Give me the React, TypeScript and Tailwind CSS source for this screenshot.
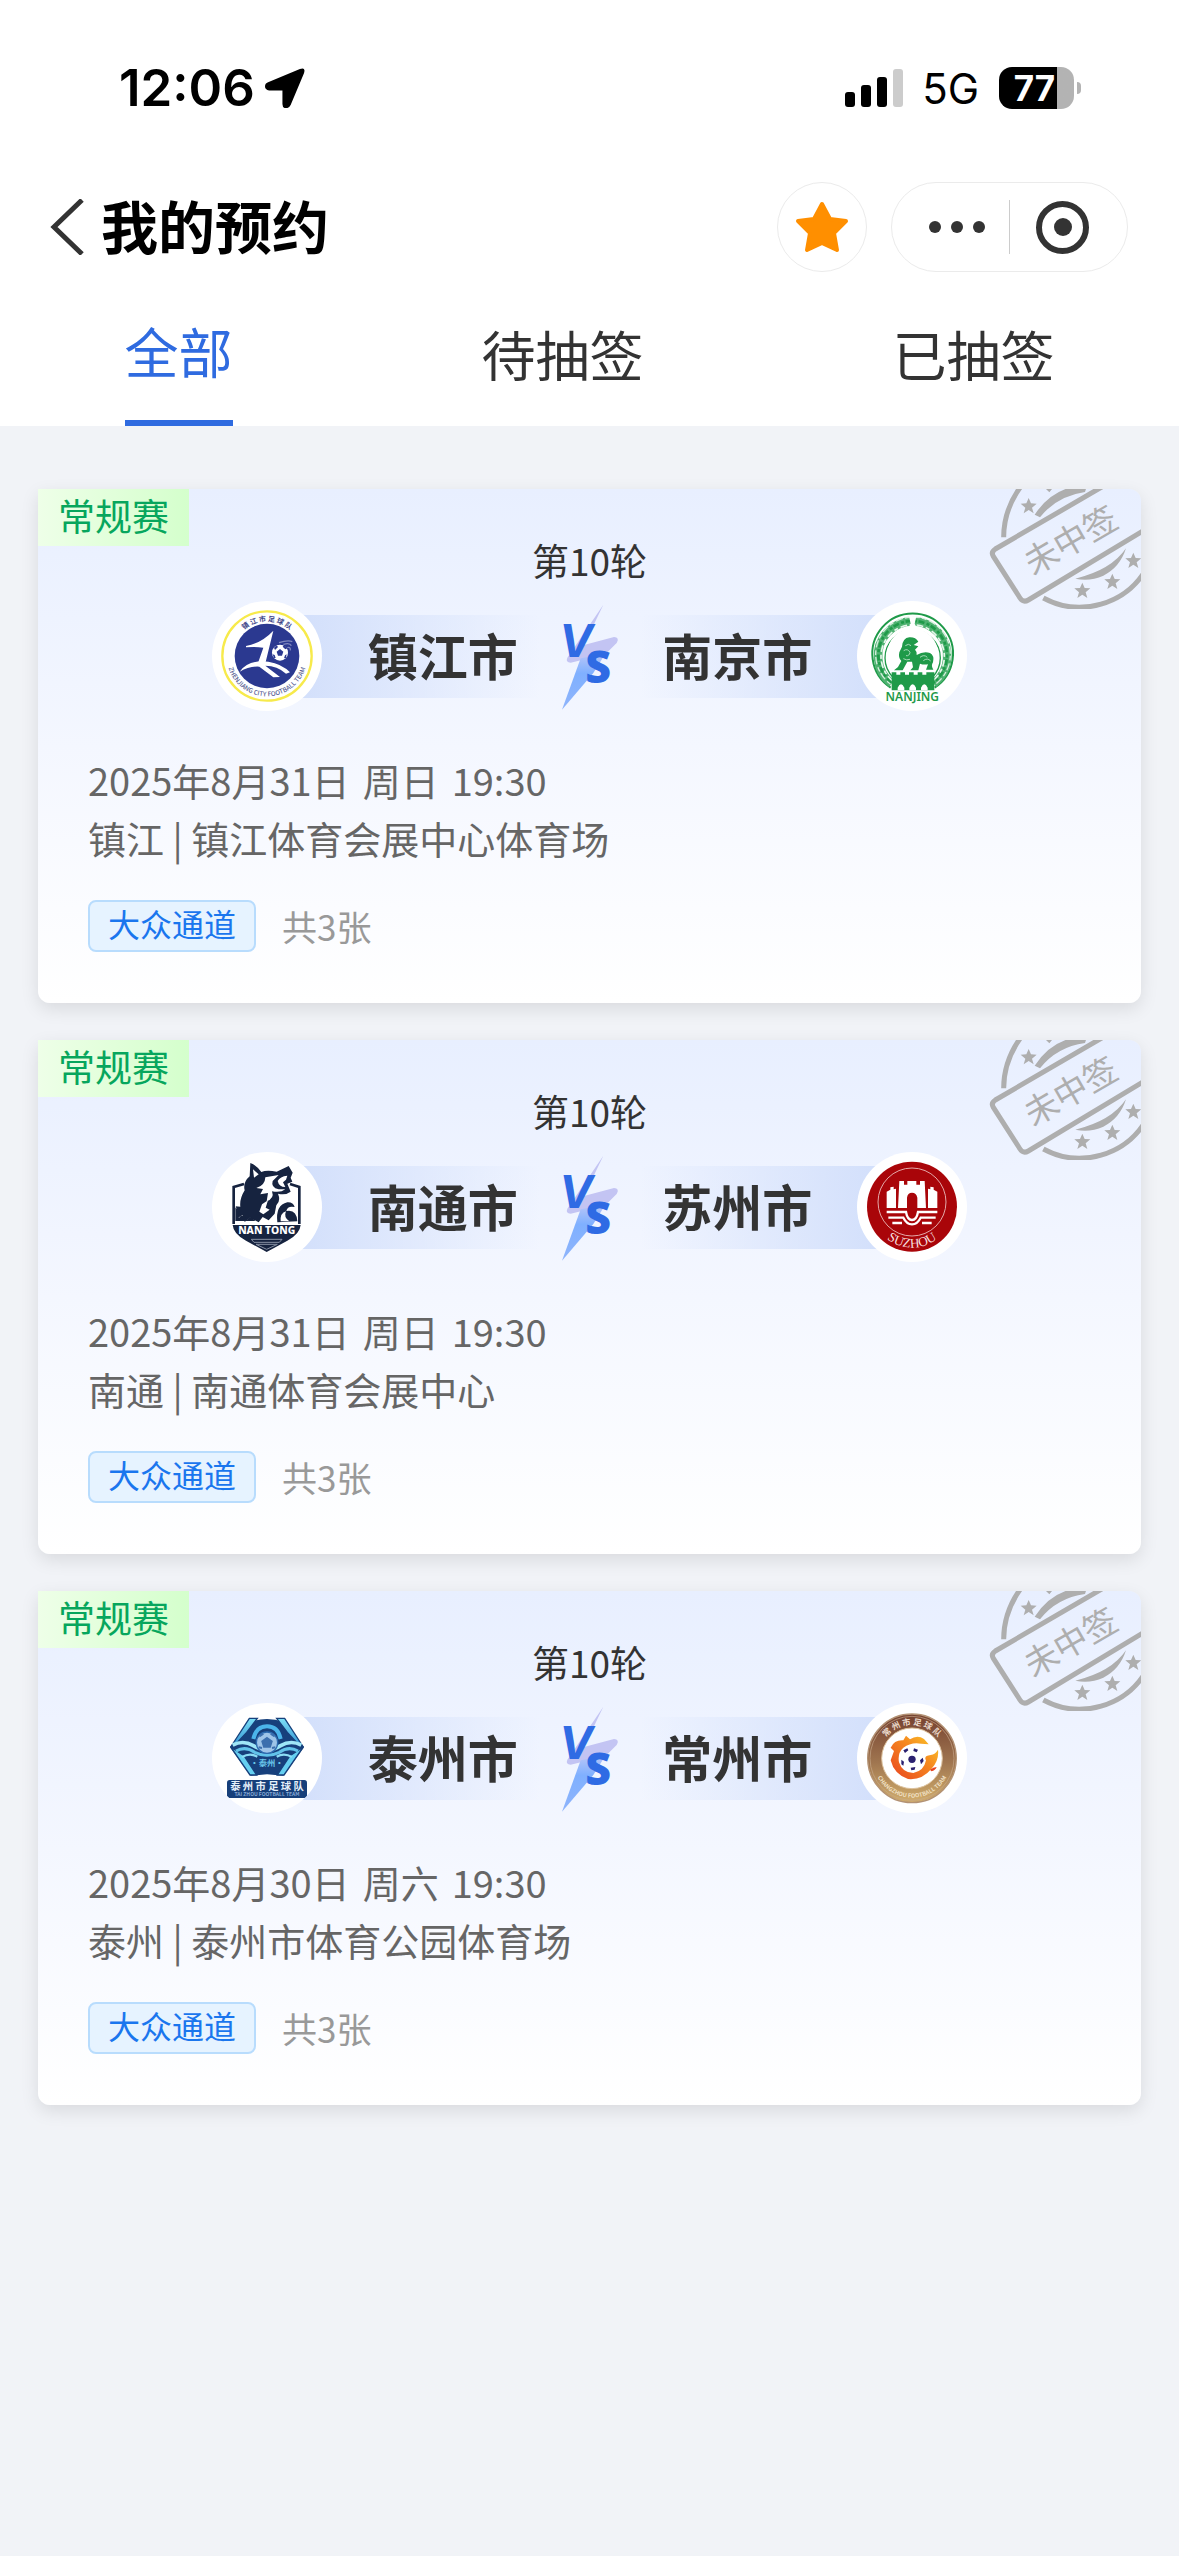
import { useState } from 'react';
import type { ReactNode } from 'react';

type Match = {
  id: number;
  round: string;
  home: string;
  away: string;
  homeLogo: ReactNode;
  awayLogo: ReactNode;
  day: string;
  weekday: string;
  time: string;
  venue: string;
};

const STAR = '0,-25 7,-9 24,-8 10,4 15,21 0,11 -15,21 -10,4 -24,-8 -7,-9';

/* ---------- team logos ---------- */

function ZhenjiangLogo() {
  return (
    <svg viewBox="36 32 330 330" className="size-full" aria-hidden="true">
      <defs>
        <path id="zj-top" d="M97 197 A104 104 0 0 1 305 197" />
        <path id="zj-bottom" d="M80 197 A121 121 0 0 0 322 197" />
      </defs>
      <circle cx="201" cy="197" r="134" fill="#fff" stroke="#f7ea4b" strokeWidth="7" />
      <circle cx="201" cy="197" r="97" fill="#2b3990" />
      <text fill="#3d4588" fontSize="21" fontWeight="700">
        <textPath href="#zj-top" startOffset="50%" textAnchor="middle">镇 江 市 足 球 队</textPath>
      </text>
      <text fill="#555c92" fontSize="19" fontWeight="500">
        <textPath href="#zj-bottom" startOffset="50%" textAnchor="middle">ZHENJIANG CITY FOOTBALL TEAM</textPath>
      </text>
      <path d="M138 167 Q185 158 220 121 L197 215 L175 215 L190 172 Q165 168 138 171 Z" fill="#fff" />
      <path d="M119 244 Q145 207 205 214 Q245 220 270 246 L258 250 Q232 226 196 226 L240 260 L220 261 L178 229 Q148 227 119 244 Z" fill="#fff" />
      <circle cx="240" cy="187" r="24" fill="#fff" />
      <path d="M240 176 l10 8 -4 12 h-12 l-4 -12 z M222 172 l8 -7 4 5 -9 9 z M252 165 l9 9 -5 3 -8 -8 z M218 192 l6 2 3 9 -5 1 z M260 192 l-5 3 -3 9 6 -1 z" fill="#2b3990" />
      <path d="M237 157 Q264 148 277 154 M250 162 Q270 156 274 166 M262 172 Q272 168 271 180" stroke="#8089bd" strokeWidth="4" fill="none" />
    </svg>
  );
}

function NanjingLogo() {
  return (
    <svg viewBox="51 32 330 330" className="size-full" aria-hidden="true">
      <path d="M152 292 A121 121 0 1 1 284 292" fill="none" stroke="#1f9a49" strokeWidth="6" />
      <path d="M155 280 A104 104 0 1 1 281 280" fill="none" stroke="#4fb271" strokeWidth="26" />
      <path d="M152 282 A112 112 0 1 1 286 282" fill="none" stroke="#d5eedd" strokeWidth="4" strokeDasharray="14 9 22 6" />
      <path d="M155 276 A103 103 0 1 1 281 276" fill="none" stroke="#1f9a49" strokeWidth="8" strokeDasharray="18 7 9 5" />
      <path d="M158 272 A95 95 0 1 1 278 272" fill="none" stroke="#e6f5eb" strokeWidth="5" strokeDasharray="20 8 12 9" />
      <path d="M160 262 A83 83 0 1 1 276 262" fill="none" stroke="#1f9a49" strokeWidth="4" />
      <circle cx="218" cy="190" r="76" fill="#fff" />
      <path d="M207 78 h22 l-5 22 9 17 h-30 l9 -17 z" fill="#fff" />
      {/* stone lion */}
      <path
        d="M186 169 Q188 143 208 141 Q227 140 235 154 L221 164 L235 168 L225 178 Q232 184 230 194 Q250 182 270 188 Q284 196 279 216 Q272 226 280 238 L258 238 L264 222 Q250 224 240 220 L235 240 L211 240 L219 231 L216 214 L202 214 L188 240 L162 240 L174 230 L184 212 Q174 203 178 186 Z"
        fill="#1f9a49"
      />
      <path d="M196 166 q10 -8 17 0 M191 181 q12 -8 19 5 q-2 12 -12 10 M240 201 q12 -10 22 0 M250 211 q12 -10 22 1 M190 205 q10 6 20 2" stroke="#a9d9b9" strokeWidth="3" fill="none" />
      {/* city wall */}
      <path d="M155 246 h14 v7 h12 v-7 h14 v7 h12 v-7 h14 v7 h12 v-7 h14 v7 h12 v-7 h24 V300 H155 Z" fill="#1f9a49" />
      <path d="M173 300 v-8 q10 -20 20 0 v8 z M208 300 v-8 q10 -20 20 0 v8 z M243 300 v-8 q10 -20 20 0 v8 z" fill="#fff" />
      <text x="217" y="333" textAnchor="middle" fill="#1f9a49" fontSize="36" fontWeight="600" className="font-['Noto_Sans']">
        NANJING
      </text>
    </svg>
  );
}

function NantongLogo() {
  return (
    <svg viewBox="36 39 330 330" className="size-full" aria-hidden="true">
      <path d="M132 135 L101 144 V255 M270 135 L298 144 V255" fill="none" stroke="#16233f" strokeWidth="8" />
      <path d="M98 258 H302 Q300 285 262 305 L200 339 L138 305 Q100 285 98 258 Z" fill="#16233f" />
      <path
        d="M151 72 Q168 78 184 99 Q200 92 230 98 L266 81 L278 101 L272 116 L277 128 L262 134 L272 158 Q256 170 234 164 Q243 186 229 199 L224 224 L206 244 L188 234 L176 250 L150 236 L134 249 L128 228 L112 238 Q114 214 107 202 L121 203 Q118 180 134 154 Q128 130 149 112 Z"
        fill="#16233f"
      />
      <path d="M159 91 L176 106 L162 116 Z" fill="#fff" />
      <path d="M196 115 L236 108 L218 126 Q212 146 236 151 L256 151 Q242 162 216 157 Q224 178 200 187 L204 162 L181 166 L189 150 L169 147 Q195 140 196 115 Z" fill="#fff" />
      <path d="M233 126 Q240 112 262 110 L258 122 L249 130 L256 144 Q237 144 233 126 Z" fill="#fff" />
      <path d="M186 196 L204 184 L197 206 L209 212 L190 226 L178 218 Z" fill="#fff" />
      <path d="M106 205 Q120 216 116 238 Q128 218 140 244 Q152 226 166 246 H106 Z" fill="#16233f" />
      <path d="M232 250 Q226 198 262 190 Q280 189 284 204 Q262 200 259 216 Q290 210 292 247 Z" fill="#16233f" />
      <path d="M242 247 Q240 222 258 217 Q250 235 268 247 Z" fill="#fff" />
      <text x="200" y="286" textAnchor="middle" fill="#fff" fontSize="31" fontWeight="800" className="font-['Noto_Sans']">
        NAN TONG
      </text>
      <path d="M154 301 H246 L238 310 H162 Z" fill="none" stroke="#8790a3" strokeWidth="3" />
      <path d="M168 316 H232 L200 331 Z" fill="none" stroke="#8790a3" strokeWidth="3" />
    </svg>
  );
}

function SuzhouLogo() {
  return (
    <svg viewBox="51 39 330 330" className="size-full" aria-hidden="true">
      <defs>
        <path id="sz-bottom" d="M94 204 A122 122 0 0 0 338 204" />
      </defs>
      <circle cx="216" cy="203" r="135" fill="#a90509" />
      <circle cx="216" cy="189" r="102" fill="none" stroke="#e3a9a9" strokeWidth="3" />
      <path d="M140 207 V158 L151 152 V145 L161 143 V151 L168 149 V207 Z M264 207 V149 L271 151 V143 L281 145 V152 L292 158 V207 Z" fill="#fff" />
      <path d="M174 207 L178 126 H192 V137 H202 V126 H229 V137 H240 V126 H254 L258 207 H232 V176 Q229 161 216 161 Q203 161 201 176 V207 Z" fill="#fff" />
      <path d="M140 219 H198 Q202 243 216 243 Q230 243 234 219 H292 M145 236 H190 Q200 256 216 256 Q232 256 242 236 H287 M157 252 H186 M246 252 H275" fill="none" stroke="#fff" strokeWidth="7" />
      <text fill="#f6dede" fontSize="40" className="font-['Liberation_Serif']">
        <textPath href="#sz-bottom" startOffset="50%" textAnchor="middle">SUZHOU</textPath>
      </text>
    </svg>
  );
}

function TaizhouLogo() {
  return (
    <svg viewBox="36 42 330 330" className="size-full" aria-hidden="true">
      <defs>
        <linearGradient id="tz-wing" x1="0" x2="0" y1="0" y2="1">
          <stop offset="0" stopColor="#7de0f8" />
          <stop offset="1" stopColor="#2f8fd0" />
        </linearGradient>
      </defs>
      <path d="M152 98 Q176 90 201 90 Q226 90 250 98 L312 174 L250 260 L201 256 L152 260 L90 174 Z" fill="#17407c" />
      <path d="M148 88 H172 L140 130 L112 160 L92 174 Z" fill="url(#tz-wing)" stroke="#17407c" strokeWidth="4" />
      <path d="M254 88 H230 L262 130 L290 160 L310 174 Z" fill="url(#tz-wing)" stroke="#17407c" strokeWidth="4" />
      <path d="M92 174 L150 258 H170 L132 200 Z" fill="#65cff0" stroke="#17407c" strokeWidth="4" />
      <path d="M310 174 L252 258 H232 L270 200 Z" fill="#65cff0" stroke="#17407c" strokeWidth="4" />
      <path d="M160 150 Q168 112 201 112 Q234 112 242 150" fill="none" stroke="#4bb4ea" strokeWidth="12" />
      <path d="M98 168 Q130 152 160 170 Q201 196 242 170 Q272 152 304 168" fill="none" stroke="#9fe6f7" strokeWidth="11" />
      <path d="M108 186 Q136 170 164 190 Q201 208 238 190 Q266 170 294 186" fill="none" stroke="#62c3ea" strokeWidth="9" />
      <path d="M126 204 Q150 190 172 203 M276 204 Q252 190 230 203" fill="none" stroke="#8bdcf5" strokeWidth="7" />
      <circle cx="201" cy="161" r="32" fill="#9ec4e8" stroke="#2c6bb0" strokeWidth="4" />
      <path d="M201 147 l14 10 -5 16 h-18 l-5 -16 z M178 142 l12 -8 M212 134 l12 8 M176 175 l10 2 M216 177 l10 -2" fill="#3c6fae" stroke="#3c6fae" strokeWidth="6" />
      <text x="201" y="232" textAnchor="middle" fill="#6bc8ec" fontSize="25" fontWeight="700">
        ·泰州·
      </text>
      <rect x="81" y="273" width="240" height="54" rx="8" fill="#173f7a" />
      <text x="201" y="304" textAnchor="middle" fill="#e6f1fb" fontSize="31" fontWeight="700">
        泰 州 市 足 球 队
      </text>
      <text x="201" y="322" textAnchor="middle" fill="#86a9d4" fontSize="15" fontWeight="700">
        TAI ZHOU FOOTBALL TEAM
      </text>
    </svg>
  );
}

function ChangzhouLogo() {
  return (
    <svg viewBox="51 42 330 330" className="size-full" aria-hidden="true">
      <defs>
        <linearGradient id="cz-ring" x1="0" x2="0" y1="0" y2="1">
          <stop offset="0" stopColor="#74402f" />
          <stop offset="0.55" stopColor="#a07650" />
          <stop offset="1" stopColor="#d1ad6c" />
        </linearGradient>
        <linearGradient id="cz-fire" x1="0" x2="1" y1="1" y2="0">
          <stop offset="0" stopColor="#e8431f" />
          <stop offset="0.6" stopColor="#f68b1f" />
          <stop offset="1" stopColor="#fbd12c" />
        </linearGradient>
        <path id="cz-top" d="M116 208 A100 100 0 0 1 316 208" />
        <path id="cz-bottom" d="M98 208 A118 118 0 0 0 334 208" />
      </defs>
      <circle cx="216" cy="208" r="133" fill="url(#cz-ring)" stroke="#b39274" strokeWidth="4" />
      <circle cx="216" cy="208" r="126" fill="none" stroke="#c7a98c" strokeWidth="2" />
      <circle cx="216" cy="208" r="91" fill="#fff" stroke="#dcc19c" strokeWidth="3" />
      <text fill="#ead9cb" fontSize="25" fontWeight="700">
        <textPath href="#cz-top" startOffset="50%" textAnchor="middle">常 州 市 足 球 队</textPath>
      </text>
      <text fill="#f0e0c4" fontSize="17" fontWeight="700">
        <textPath href="#cz-bottom" startOffset="50%" textAnchor="middle">CHANGZHOU FOOTBALL TEAM</textPath>
      </text>
      <circle cx="217" cy="211" r="38" fill="#fff" />
      <path
        d="M152 176 Q163 152 190 154 L198 140 L210 151 Q232 136 252 150 L266 166 L244 164 Q214 158 190 176 Q172 192 177 220 Q187 252 220 252 Q252 246 258 214 Q250 200 272 198 Q286 196 294 182 Q298 214 274 240 Q246 274 204 270 Q162 256 152 214 L162 186 Z"
        fill="url(#cz-fire)"
      />
      <path d="M270 242 Q280 234 290 234 Q286 244 274 247 Z" fill="#e8431f" />
      <circle cx="216" cy="211" r="11" fill="#2b2170" />
      <path d="M190 184 l12 -6 3 6 -10 8 z M222 178 l12 4 -4 8 -10 -4 z M184 212 l8 6 -2 12 -6 -4 z M212 236 l14 -2 -2 8 -10 2 z M240 214 l8 -8 3 10 -8 10 z" fill="#2b2170" />
    </svg>
  );
}

/* ---------- small drawings ---------- */

function VersusMark() {
  return (
    <svg viewBox="0 0 300 390" className="h-[130px] w-[100px] shrink-0" role="img" aria-label="VS">
      <defs>
        <linearGradient id="vs-bolt" x1="0" x2="0" y1="0" y2="1">
          <stop offset="0" stopColor="#b9c6f8" />
          <stop offset="0.35" stopColor="#7fb0ff" />
          <stop offset="1" stopColor="#8fb4fb" />
        </linearGradient>
      </defs>
      <path d="M190 41 L132 162 L222 138 Q240 140 230 156 L196 190 L92 215 Q76 214 82 200 Z" fill="#c3c4f3" />
      <path d="M122 202 L196 188 L160 246 L66 356 Z" fill="url(#vs-bolt)" />
      <g fill="#2f6be4">
        <text x="57" y="197" fontSize="137" fontWeight="700" fontStyle="italic" className="font-['Inter']">
          V
        </text>
        <text x="136" y="276" fontSize="134" fontWeight="800" className="font-['Open_Sans']">
          S
        </text>
      </g>
    </svg>
  );
}

function LostStamp() {
  return (
    <svg viewBox="57 27 456 360" className="absolute top-0 right-0 h-[120px] w-[152px]" role="img" aria-label="未中签">
      <g fill="none" stroke="#aeaeae" strokeWidth="15">
        <path d="M500 -40 L76 207 Q62 216 70 229 L150 354 Q160 369 175 360 L530 146" />
        <path d="M101 172 Q101 90 152 20" />
        <path d="M220 354 A231 231 0 0 0 530 265" />
      </g>
      <path d="M194 104 Q240 34 312 20 L350 20 L345 36 Q260 48 210 112 Z M316 296 Q424 270 468 205 Q450 262 400 287 Q360 305 316 296 Z M228 27 h18 l-8 10 z" fill="#aeaeae" />
      <g fill="#aeaeae">
        <polygon points={STAR} transform="translate(176 79)" />
        <polygon points={STAR} transform="translate(337 333)" />
        <polygon points={STAR} transform="translate(427 306)" />
        <polygon points={STAR} transform="translate(490 243)" />
      </g>
      <text x="304" y="217" textAnchor="middle" transform="rotate(-30 304 184)" fontSize="101" fill="#aeaeae" fontWeight="400">
        未中签
      </text>
    </svg>
  );
}

/* ---------- page parts ---------- */

function StatusBar() {
  return (
    <div className="flex h-[182px] items-start justify-between pt-[66px] pr-[98px] pl-[119px] text-black">
      <div className="flex h-[44px] items-center gap-[10px]">
        <span className="font-['Inter'] text-[51px] leading-[44px] font-semibold">12:06</span>
        <svg viewBox="0 0 39 39" className="size-[40px]" aria-hidden="true">
          <path d="M3 14 L34 1 Q40 -1 38 5 L25 36 Q23 40 19 39 Q17 38 17 35 V22 H4 Q0 21 0 18 Q0 15 3 14 Z" fill="#000" />
        </svg>
      </div>
      <div className="flex h-[44px] items-center">
        <svg viewBox="0 0 58 38" className="h-[38px] w-[58px]" aria-hidden="true">
          <rect x="0" y="23" width="10" height="15" rx="3" />
          <rect x="16" y="16" width="10" height="22" rx="3" />
          <rect x="32" y="8" width="10" height="30" rx="3" />
          <rect x="48" y="0" width="10" height="38" rx="3" fill="#ccc" />
        </svg>
        <span className="ml-[19px] pt-[2px] font-['Inter'] text-[42px] leading-[44px]">5G</span>
        <div className="ml-[20px] flex h-[42px] w-[75px] items-center justify-center rounded-[13px] bg-linear-to-r from-black from-78% to-[#b3b3b3] to-78% pr-[4px] font-['Inter'] text-[35px] leading-[42px] font-bold text-white">
          77
        </div>
        <div className="ml-[3px] h-[12px] w-[4px] rounded-r-full bg-[#b3b3b3]" />
      </div>
    </div>
  );
}

function NavBar() {
  return (
    <div className="flex h-[90px] items-center pr-[51px] pl-[50px]">
      <button aria-label="返回" className="mr-[17px]">
        <svg viewBox="0 0 34 56" className="h-[56px] w-[34px]" fill="none" stroke="#333" strokeWidth="5" aria-hidden="true">
          <path d="M32 1 L4 28 L32 55" />
        </svg>
      </button>
      <h1 className="pb-[6px] text-[57px] leading-[84px] font-bold text-black">我的预约</h1>
      <button aria-label="收藏" className="ml-auto flex size-[90px] items-center justify-center rounded-full border border-[#ebebeb]">
        <svg viewBox="0 0 54 52" className="h-[52px] w-[54px]" aria-hidden="true">
          <path d="M27 3 L35 18 L51 20 L39 32 L42 49 L27 42 L12 49 L15 32 L3 20 L19 18 Z" fill="#ff8f00" stroke="#ff8f00" strokeWidth="4" strokeLinejoin="round" />
        </svg>
      </button>
      <div className="ml-[24px] flex h-[90px] w-[237px] items-center rounded-full border border-[#ebebeb]">
        <button aria-label="更多" className="flex flex-1 items-center justify-center gap-[10px] pl-[12px]">
          <span className="size-[12px] rounded-full bg-[#333]" />
          <span className="size-[12px] rounded-full bg-[#333]" />
          <span className="size-[12px] rounded-full bg-[#333]" />
        </button>
        <span className="h-[54px] w-px bg-[#ccc]" />
        <button aria-label="关闭" className="flex flex-1 items-center justify-center pr-[12px]">
          <span className="flex size-[53px] items-center justify-center rounded-full border-6 border-[#333]">
            <span className="size-[18px] rounded-full bg-[#333]" />
          </span>
        </button>
      </div>
    </div>
  );
}

function Team({ name, logo, away }: { name: string; logo: ReactNode; away?: boolean }) {
  return (
    <div className={away ? 'flex flex-1 flex-row-reverse items-center' : 'flex flex-1 items-center'}>
      <div className="z-10 size-[110px] shrink-0 overflow-hidden rounded-full bg-white">{logo}</div>
      <div
        className={
          away
            ? '-mr-[28px] flex h-[83px] flex-1 items-center justify-center bg-linear-to-l from-[#d2dffb] to-transparent pr-[28px]'
            : '-ml-[28px] flex h-[83px] flex-1 items-center justify-center bg-linear-to-r from-[#d2dffb] to-transparent pl-[28px]'
        }
      >
        <span
          className={
            away
              ? 'pr-[22px] pb-[4px] text-[50px] leading-[60px] font-bold text-[#333]'
              : 'pb-[4px] pl-[24px] text-[50px] leading-[60px] font-bold text-[#333]'
          }
        >
          {name}
        </span>
      </div>
    </div>
  );
}

function MatchCard({ match }: { match: Match }) {
  return (
    <article className="relative overflow-hidden rounded-[12px] rounded-tl-none bg-linear-to-b from-[#e8efff] via-[#f4f7ff] to-white shadow-[0_6px_18px_rgba(0,0,0,0.1)]">
      <span className="absolute top-0 left-0 flex h-[57px] w-[151px] items-center justify-center bg-linear-to-r from-[#eeffe8] to-[#d4ffcc] pb-[4px] text-[37px] leading-[53px] text-[#07a65d]">
        常规赛
      </span>
      <LostStamp />

      <div className="pt-[42px] pb-[2px] text-center text-[37px] leading-[58px] text-[#333]">{match.round}</div>

      {/* home vs away */}
      <div className="mx-auto flex h-[130px] w-[755px] items-center">
        <Team name={match.home} logo={match.homeLogo} />
        <VersusMark />
        <Team name={match.away} logo={match.awayLogo} away />
      </div>

      <div className="px-[50px] pt-[30px] pb-[51px]">
        <p className="flex gap-[13px] text-[38px] leading-[58px] text-[#666]">
          <span>{match.day}</span>
          <span>{match.weekday}</span>
          <span>{match.time}</span>
        </p>
        <p className="text-[38px] leading-[58px] text-[#666]">{match.venue}</p>
        <div className="mt-[33px] flex h-[52px] items-center gap-[26px]">
          <span className="flex h-[52px] items-center rounded-[8px] border-2 border-[#b8dcfd] bg-[#e6f3ff] px-[18px] pb-[6px] text-[32px] leading-[42px] text-[#1a76ee]">
            大众通道
          </span>
          <span className="text-[35px] leading-[52px] text-[#999]">共3张</span>
        </div>
      </div>
    </article>
  );
}

const matches: Match[] = [
  {
    id: 1,
    round: '第10轮',
    home: '镇江市',
    away: '南京市',
    homeLogo: <ZhenjiangLogo />,
    awayLogo: <NanjingLogo />,
    day: '2025年8月31日',
    weekday: '周日',
    time: '19:30',
    venue: '镇江 | 镇江体育会展中心体育场',
  },
  {
    id: 2,
    round: '第10轮',
    home: '南通市',
    away: '苏州市',
    homeLogo: <NantongLogo />,
    awayLogo: <SuzhouLogo />,
    day: '2025年8月31日',
    weekday: '周日',
    time: '19:30',
    venue: '南通 | 南通体育会展中心',
  },
  {
    id: 3,
    round: '第10轮',
    home: '泰州市',
    away: '常州市',
    homeLogo: <TaizhouLogo />,
    awayLogo: <ChangzhouLogo />,
    day: '2025年8月30日',
    weekday: '周六',
    time: '19:30',
    venue: '泰州 | 泰州市体育公园体育场',
  },
];

const tabs = ['全部', '待抽签', '已抽签'];

export default function App() {
  const [active, setActive] = useState('全部');

  return (
    <div className="min-h-screen bg-[#f1f3f7] font-['Noto_Sans_CJK_SC',sans-serif]">
      <header className="bg-white">
        <StatusBar />
        <NavBar />
        <nav className="flex h-[154px] justify-around">
          {tabs.map((tab) => (
            <button
              key={tab}
              onClick={() => setActive(tab)}
              className={
                tab === active
                  ? 'border-b-6 border-[#2f6be0] pt-[10px] text-[54px] leading-[72px] text-[#2f6be0]'
                  : 'pt-[10px] text-[54px] leading-[72px] text-[#333]'
              }
            >
              {tab}
            </button>
          ))}
        </nav>
      </header>

      <main className="flex flex-col gap-[37px] px-[38px] pt-[63px] pb-[63px]">
        {matches.map((match) => (
          <MatchCard key={match.id} match={match} />
        ))}
      </main>
    </div>
  );
}
